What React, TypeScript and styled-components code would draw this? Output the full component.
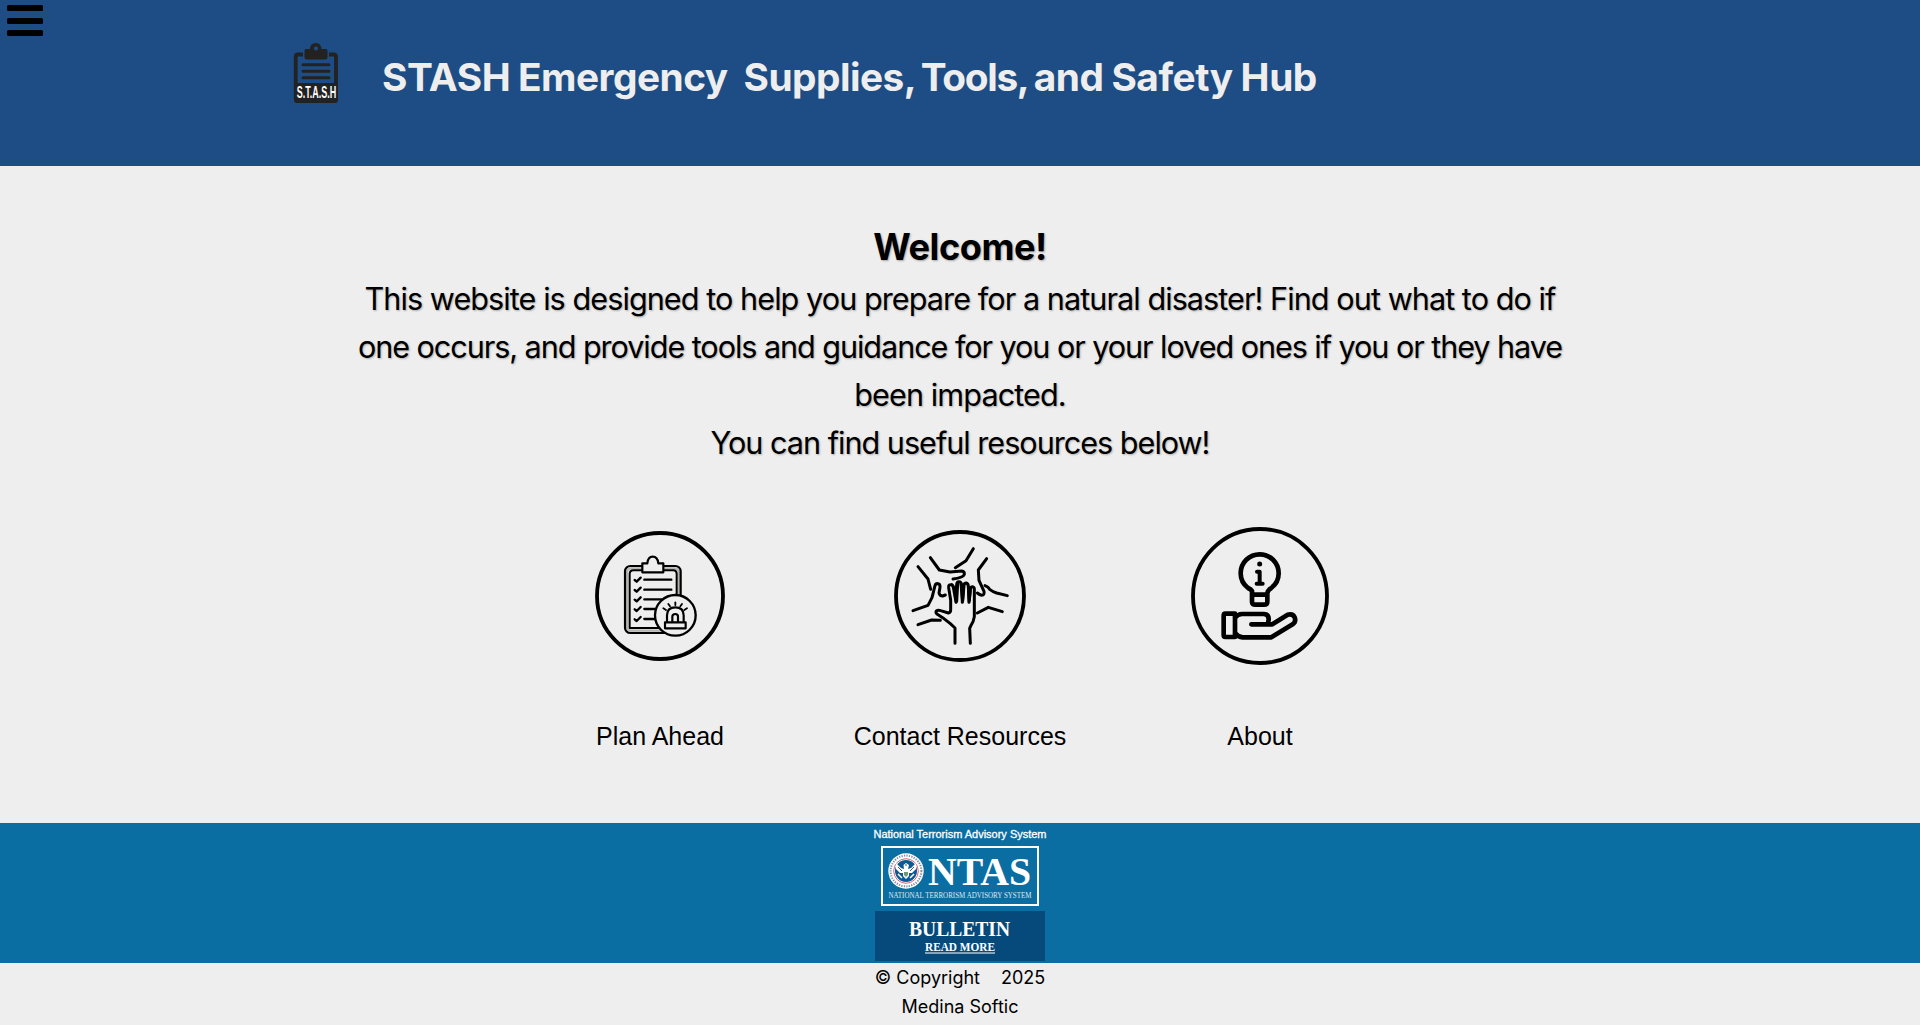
import React from "react";
import styled, { createGlobalStyle } from "styled-components";

const Global = createGlobalStyle`
  * { box-sizing: border-box; }
  html, body { margin: 0; padding: 0; }
  body {
    background: #eeeeee;
    color: #000;
    font-family: Inter, "Liberation Sans", sans-serif;
    height: 1025px;
    overflow: hidden;
  }
  svg { display: block; }
`;

const Page = styled.div`
  display: flex;
  flex-direction: column;
  height: 1025px;
`;

const Header = styled.header`
  display: flex;
  align-items: flex-start;
  height: 166px;
  background: #1d4d84;
`;

const MenuButton = styled.button`
  display: flex;
  flex-direction: column;
  gap: 6.5px;
  width: 50px;
  padding: 5px 7px 0;
  border: 0;
  background: none;
`;

const MenuBar = styled.span`
  display: block;
  height: 6px;
  width: 35.5px;
  border-radius: 1.5px;
  background: #000;
`;

const Brand = styled.div`
  display: flex;
  padding-left: 242px;
`;

const LogoBox = styled.div`
  width: 48px;
  padding-top: 42px;
`;

const Title = styled.h1`
  margin: 0;
  padding: 47px 0 0 42px;
  font-size: 38.8px;
  line-height: 60px;
  font-weight: 700;
  white-space: pre;
  color: #eeeeee;
`;

const TitlePart = styled.span<{ $track: number; $word?: number }>`
  letter-spacing: ${(p) => p.$track}px;
  word-spacing: ${(p) => p.$word ?? 0}px;
`;

const Main = styled.main`
  display: flex;
  flex-direction: column;
  align-items: center;
  height: 657px;
  padding-top: 54px;
`;

const Welcome = styled.h2`
  margin: 0 0 1px;
  font-size: 36.2px;
  line-height: 54px;
  font-weight: 700;
  letter-spacing: -0.5px;
  text-shadow: 1px 1px 2px rgba(0, 0, 0, 0.3);
`;

const Line = styled.p<{ $track: number }>`
  margin: 0;
  font-size: 30.6px;
  line-height: 48px;
  white-space: nowrap;
  letter-spacing: ${(p) => p.$track}px;
  text-shadow: 1px 1px 2px rgba(0, 0, 0, 0.27);
`;

const Cards = styled.nav`
  display: flex;
  justify-content: center;
  margin-top: 48px;
`;

const Card = styled.a`
  display: flex;
  flex-direction: column;
  align-items: center;
  width: 300px;
  color: #000;
  text-decoration: none;
`;

const CardLabel = styled.span`
  margin-top: 46px;
  font: 25px/30px "Liberation Sans", Arial, sans-serif;
`;

const Advisory = styled.section`
  display: flex;
  justify-content: center;
  height: 140px;
  background: #0a6ea3;
`;

const Footer = styled.footer`
  display: flex;
  flex-direction: column;
  align-items: center;
  font-size: 18px;
  line-height: 29px;
`;

const FooterLine = styled.div`
  display: flex;
  gap: 21px;
  white-space: nowrap;
`;

const StashLogo = () => (
  <svg width="48" height="64" viewBox="0 0 48 64">
    <path d="M11 12.500H6Q3.700 12.500 3.700 15V56Q3.700 59 6.500 59H41Q44 59 44 56V15Q44 12.500 41.500 12.500H37" fill="none" stroke="#222" strokeWidth="3.800" />
    <rect x="2" y="41" width="44" height="20" rx="3" fill="#222" />
    <path fillRule="evenodd" d="M14 7H18Q18 1 24 1Q29 1 29.500 7H34Q35.500 7 35.500 9V15Q35.500 17.500 33 17.500H15Q12.500 17.500 12.500 15V9Q12.500 7 14 7ZM24 4.500A2 2 0 1 0 24 8.500A2 2 0 1 0 24 4.500Z" fill="#222" />
    <path d="M11 22.700H37M11 29.300H37M11 35.800H37" stroke="#222" strokeWidth="3" strokeLinecap="round" />
    <text transform="translate(4.800 56.200) scale(0.530 1)" fontFamily="Liberation Sans" fontWeight="700" fontSize="17" fill="#fff">S.T.A.S.H</text>
  </svg>
);

const PlanIcon = () => (
  <svg width="160" height="160" viewBox="0 0 480 480" fill="none" stroke="#000" strokeLinecap="round" strokeLinejoin="round">
    <circle cx="240" cy="243" r="189" strokeWidth="11.500" />
    <rect x="141" y="160" width="155" height="187" rx="12" stroke="#b5b5b0" strokeWidth="7" />
    <rect x="135" y="153" width="167" height="201" rx="16" strokeWidth="6.500" />
    <path d="M149 339V178Q149 166 160 166H280Q290 166 290 177V245M149 339H240" strokeWidth="6" />
    <path d="M187 172V145H202Q204 125 218 125Q233 125 235 145H250V172Z" fill="#eee" strokeWidth="6.500" />
    {[194, 224, 253, 282, 312].map((y, i) => (
      <path key={y} d={`M164 ${y + 1}L170 ${y + 6}L182 ${y - 6}M193 ${y}H${i < 2 ? 274 : i === 2 ? 245 : 226}`} strokeWidth="7" />
    ))}
    <circle cx="286" cy="301" r="61" fill="#eee" strokeWidth="7" />
    <path d="M261 321V301Q261 277 286 277Q311 277 311 301V321M277 320V305Q277 297 286 297Q294 297 294 305V320M255 322H317V340H255Z" strokeWidth="6.500" />
    <path d="M286 262V270M265 267L270 274M306 267L301 274M250 280L258 285M321 280L313 285" strokeWidth="5.500" />
  </svg>
);

const HandsIcon = () => (
  <svg width="160" height="160" viewBox="0 0 480 480" fill="none" stroke="#000" strokeWidth="9" strokeLinecap="round" strokeLinejoin="round">
    <circle cx="240" cy="243" r="192" strokeWidth="11.500" />
    <path d="M225 385V339L211 326L188 308L172 298Q166 293 169 288Q174 284 182 287L205 294Q212 293 212 284V255L206 218Q205 209 212 209Q218 208 220 217L228 262L230 210Q230 200 237 200Q244 200 245 210L247 262L251 212Q252 204 259 204Q265 206 265 214L267 262L271 223Q272 214 279 216Q284 218 283 226V305Q281 320 273 331L269 340L271 385" />
    <path d="M226 215L228 260M234 207L231 259M242 207L247 260M253 212L249 258M264 213L267 260M272 223L269 256" strokeWidth="7" />
    <path d="M151 128L178 165L210 171L245 168Q254 169 253 178Q250 188 219 192" />
    <path d="M280 101L258 137L226 158" />
    <path d="M320 131L295 165L297 196L312 229Q314 240 305 241Q299 240 292 234" />
    <path d="M315 212Q325 216 329 223Q338 230 350 234L382 242" />
    <path d="M292 294L325 277L367 290" />
    <path d="M114 155L144 192L152 223" />
    <path d="M99 287L144 271L156 248L165 212Q167 205 174 206Q181 207 180 217L177 234Q179 243 188 243L196 240" />
    <path d="M114 329L155 315L181 316" />
  </svg>
);

const AboutIcon = () => (
  <svg width="160" height="160" viewBox="0 0 480 480" fill="none" stroke="#000" strokeWidth="14" strokeLinecap="round" strokeLinejoin="round">
    <circle cx="240" cy="243" r="201" strokeWidth="11.500" />
    <path d="M216 238V228Q213 223 204 219C188 207 182 191 182 175C182 142 208 118 239 118C270 118 296 142 296 175C296 191 290 207 274 219Q264 225 262 234V260Q262 269 252 269H227Q216 269 216 260ZM216 239H262" />
    <path d="M231 170H239V206M230 206H248" strokeWidth="12" />
    <circle cx="239" cy="147" r="7.500" fill="#000" stroke="none" />
    <path d="M136 296H165V366H136Q131 366 131 360V302Q131 296 136 296ZM165 308Q174 297 186 297H252Q267 298 266 314L264 325M214 328H277L323 299Q339 295 344 307Q349 320 338 328L274 367H188Q174 366 165 354" />
  </svg>
);

const NtasBadge = () => (
  <svg width="174" height="140" viewBox="0 0 174 140">
    <g fill="#fff">
      <text x="0.500" y="15" fontFamily="Liberation Sans" fontSize="10.600" stroke="#fff" strokeWidth="0.300" textLength="173" lengthAdjust="spacingAndGlyphs">National Terrorism Advisory System</text>
      <rect x="9" y="24" width="156" height="58" fill="none" stroke="#fff" strokeWidth="2" />
      <circle cx="33" cy="48" r="17.700" />
      <circle cx="33" cy="48" r="15.400" fill="none" stroke="#7f90a3" strokeWidth="2" strokeDasharray="1.300 1.200" />
      <circle cx="33" cy="48" r="12.300" fill="#fff" stroke="#d0566a" strokeWidth="0.900" />
      <circle cx="33" cy="48" r="11" fill="#0d5a91" />
      <path d="M23 40L28 45L31 46L30.500 42L33 40L36 42L35 46L38 45L43 40L43 46L39 50L36 50V53L33 56L30 53V50L27 50L23 46Z" fill="#fff" />
      <path d="M25 44L29 48M41 44L37 48M32 42H34" stroke="#274a70" strokeWidth="0.900" />
      <path d="M31 49H35V52L33 54L31 52Z" fill="#6b9a7b" />
      <path d="M25 51L29 55M41 51L37 55" stroke="#fff" strokeWidth="1.500" />
      <g fontFamily="Liberation Serif">
        <text x="55" y="62" fontWeight="700" fontSize="41" textLength="103" lengthAdjust="spacingAndGlyphs">NTAS</text>
        <text x="15.500" y="75" fontSize="7.200" opacity="0.850" textLength="143" lengthAdjust="spacingAndGlyphs">NATIONAL TERRORISM ADVISORY SYSTEM</text>
      </g>
    </g>
    <rect x="2" y="88" width="170" height="50" fill="#064a7c" />
    <g fill="#fff" fontFamily="Liberation Serif" fontWeight="700">
      <text x="36" y="113" fontSize="21" textLength="101" lengthAdjust="spacingAndGlyphs">BULLETIN</text>
      <text x="52" y="128" fontSize="13" textLength="70" lengthAdjust="spacingAndGlyphs">READ MORE</text>
    </g>
    <rect x="52" y="129.500" width="70" height="1" fill="#fff" />
  </svg>
);

const cards = [
  { label: "Plan Ahead", Icon: PlanIcon },
  { label: "Contact Resources", Icon: HandsIcon },
  { label: "About", Icon: AboutIcon },
];

const lines = [
  { text: "This website is designed to help you prepare for a natural disaster! Find out what to do if", track: -0.935 },
  { text: "one occurs, and provide tools and guidance for you or your loved ones if you or they have", track: -1.06 },
  { text: "been impacted.", track: -0.9 },
  { text: "You can find useful resources below!", track: -1 },
];

export default function App() {
  return (
    <>
      <Global />
      <Page>
        <Header>
          <MenuButton aria-label="Menu">
            <MenuBar />
            <MenuBar />
            <MenuBar />
          </MenuButton>
          <Brand>
            <LogoBox><StashLogo /></LogoBox>
            <Title>
              <TitlePart $track={-0.5} $word={-0.8}>{"STASH Emergency  Supplies,"}</TitlePart>
              <TitlePart $track={-1.3} $word={-3.5}>{" Tools,"}</TitlePart>
              <TitlePart $track={-0.45} $word={-3.5}>{" and"}</TitlePart>
              <TitlePart $track={-0.45} $word={-0.9}>{" Safety Hub"}</TitlePart>
            </Title>
          </Brand>
        </Header>
        <Main>
          <Welcome>Welcome!</Welcome>
          {lines.map((l) => (
            <Line key={l.text} $track={l.track}>{l.text}</Line>
          ))}
          <Cards>
            {cards.map(({ label, Icon }) => (
              <Card key={label}>
                <Icon />
                <CardLabel>{label}</CardLabel>
              </Card>
            ))}
          </Cards>
        </Main>
        <Advisory><NtasBadge /></Advisory>
        <Footer>
          <FooterLine><span>© Copyright</span><span>2025</span></FooterLine>
          <FooterLine>Medina Softic</FooterLine>
        </Footer>
      </Page>
    </>
  );
}
